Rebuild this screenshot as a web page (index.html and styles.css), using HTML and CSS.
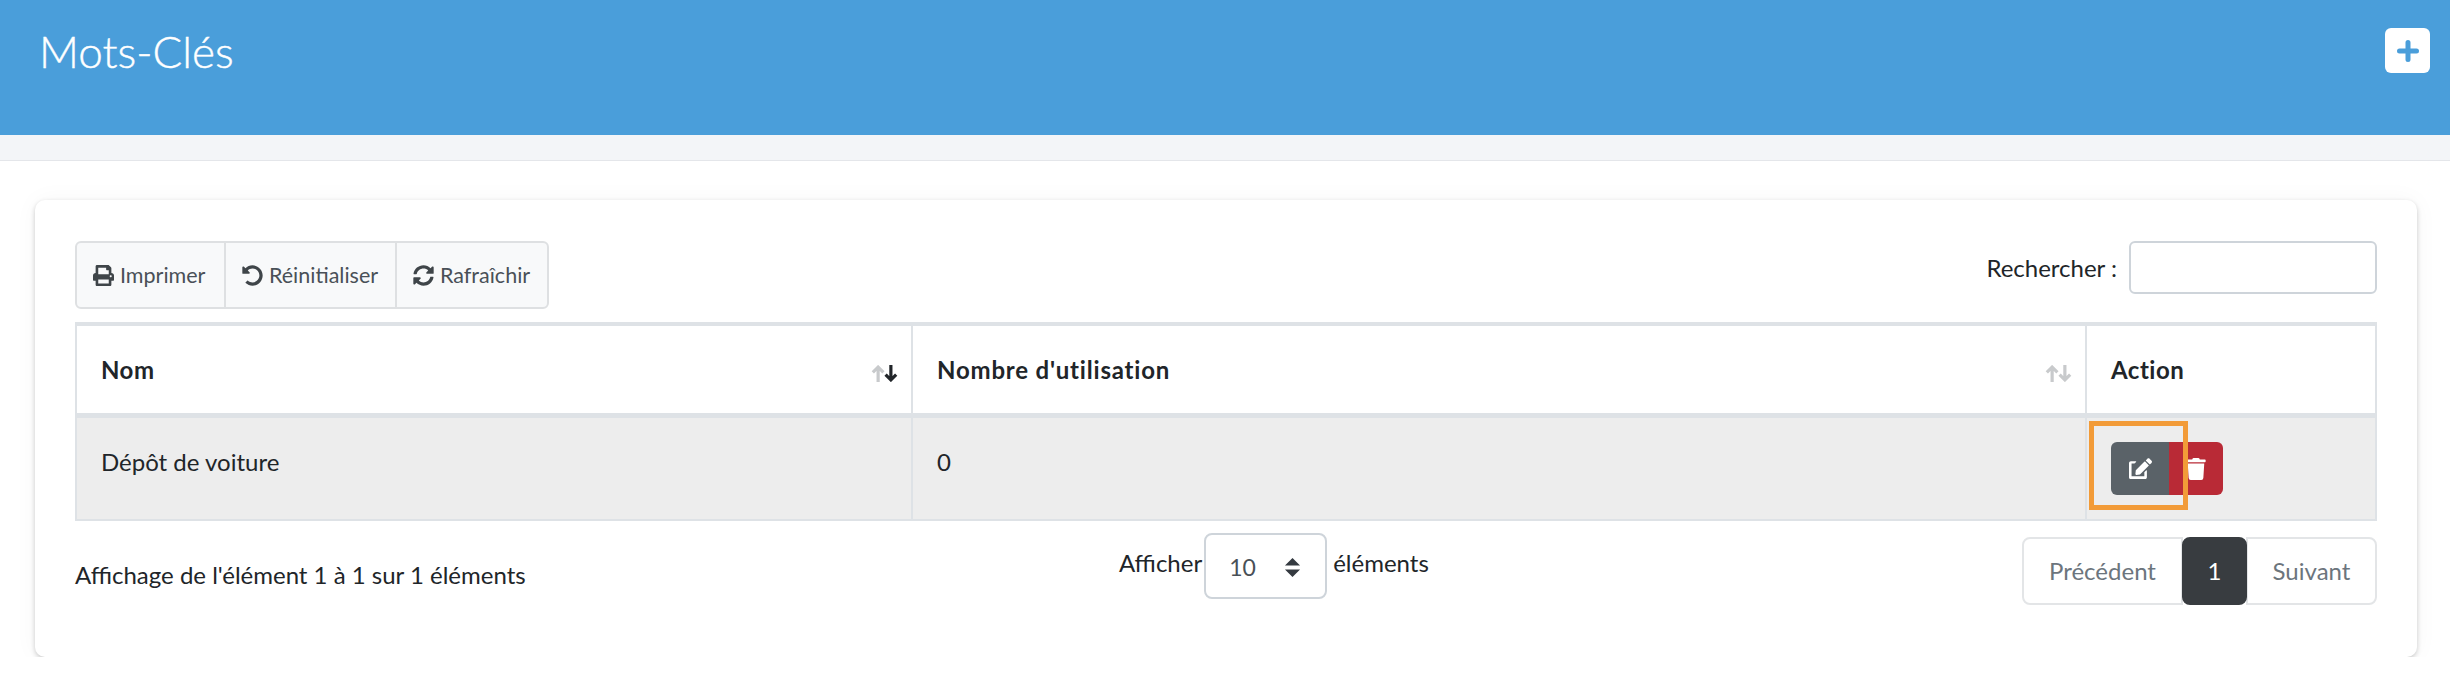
FILE: index.html
```html
<!DOCTYPE html>
<html lang="fr">
<head>
  <meta charset="UTF-8" />
  <title>Mots-Clés</title>
  <link rel="stylesheet" href="styles.css">
</head>
<body>
  <header class="page-header">
    <h1>Mots-Clés</h1>
    <button class="add-btn" type="button" aria-label="Ajouter">
      <svg viewBox="0 0 22 22" width="22" height="22"><path d="M11 2.5v17M2.5 11h17" /></svg>
    </button>
  </header>
  <div class="band"></div>

  <main class="content">
    <section class="card">
      <div class="top-row">
        <div class="tools">
          <button class="tool tool-print" type="button">
            <svg viewBox="0 0 512 512"><path d="M448 192V77.25c0-8.49-3.37-16.62-9.37-22.63L393.37 9.37c-6-6-14.14-9.37-22.63-9.37H96C78.33 0 64 14.33 64 32v160c-35.35 0-64 28.65-64 64v112c0 8.84 7.16 16 16 16h48v96c0 17.67 14.33 32 32 32h320c17.67 0 32-14.33 32-32v-96h48c8.84 0 16-7.16 16-16V256c0-35.35-28.65-64-64-64zm-64 256H128v-96h256v96zm0-224H128V64h192v48c0 8.84 7.16 16 16 16h48v96zm48 72c-13.25 0-24-10.75-24-24 0-13.26 10.75-24 24-24s24 10.74 24 24c0 13.25-10.75 24-24 24z"/></svg>
            Imprimer
          </button>
          <button class="tool tool-reset" type="button">
            <svg viewBox="0 0 512 512"><path d="M255.545 8c-66.269.119-126.438 26.233-170.86 68.685L48.971 40.971C33.851 25.851 8 36.559 8 57.941V192c0 13.255 10.745 24 24 24h134.059c21.382 0 32.09-25.851 16.971-40.971l-41.75-41.75c30.864-28.899 70.801-44.907 113.23-45.273 92.398-.798 170.283 73.977 169.484 169.442C423.236 348.009 349.816 424 256 424c-41.127 0-79.997-14.678-110.63-41.556-4.743-4.161-11.906-3.908-16.368.553L89.34 422.659c-4.872 4.872-4.631 12.815.482 17.433C133.798 479.813 192.074 504 256 504c136.966 0 247.999-111.033 248-247.998C504.001 119.193 392.354 7.755 255.545 8z"/></svg>
            Réinitialiser
          </button>
          <button class="tool tool-refresh" type="button">
            <svg viewBox="0 0 512 512"><path d="M370.72 133.28C339.458 104.008 298.888 87.962 255.848 88c-77.458.068-144.328 53.178-162.791 126.85-1.344 5.363-6.122 9.15-11.651 9.15H24.103c-7.498 0-13.194-6.807-11.807-14.176C33.933 94.924 134.813 8 256 8c66.448 0 126.791 26.136 171.315 68.685L463.03 40.97C478.149 25.851 504 36.559 504 57.941V192c0 13.255-10.745 24-24 24H345.941c-21.382 0-32.09-25.851-16.971-40.971l41.75-41.749zM32 296h134.059c21.382 0 32.09 25.851 16.971 40.971l-41.75 41.75c31.262 29.273 71.835 45.319 114.876 45.28 77.418-.07 144.315-53.144 162.787-126.849 1.344-5.363 6.122-9.15 11.651-9.15h57.304c7.498 0 13.194 6.807 11.807 14.176C478.067 417.076 377.187 504 256 504c-66.448 0-126.791-26.136-171.315-68.685L48.97 471.03C33.851 486.149 8 475.441 8 454.059V320c0-13.255 10.745-24 24-24z"/></svg>
            Rafraîchir
          </button>
        </div>
        <label class="search">
          Rechercher :
          <input type="text" />
        </label>
      </div>

      <table class="data-table">
        <colgroup>
          <col class="col-name">
          <col class="col-count">
          <col class="col-action">
        </colgroup>
        <thead>
          <tr>
            <th>
              <div class="th-inner">
                Nom
                <svg class="sort" viewBox="0 0 25 16">
                  <path class="up" d="M6.5 16V2M1.5 7l5-5 5 5" />
                  <path class="down on" d="M18.5 0v14M13.5 9l5 5 5-5" />
                </svg>
              </div>
            </th>
            <th class="th-wide">
              <div class="th-inner">
                Nombre d'utilisation
                <svg class="sort" viewBox="0 0 25 16">
                  <path class="up" d="M6.5 16V2M1.5 7l5-5 5 5" />
                  <path class="down" d="M18.5 0v14M13.5 9l5 5 5-5" />
                </svg>
              </div>
            </th>
            <th>Action</th>
          </tr>
        </thead>
        <tbody>
          <tr>
            <td>Dépôt de voiture</td>
            <td>0</td>
            <td>
              <div class="actions">
                <button class="act act-edit" type="button" aria-label="Modifier">
                  <svg viewBox="0 0 576 512"><path d="M402.6 83.2l90.2 90.2c3.8 3.8 3.8 10 0 13.8L274.4 405.6l-92.8 10.3c-12.4 1.4-22.9-9.1-21.5-21.5l10.3-92.8L388.8 83.2c3.8-3.8 10-3.8 13.8 0zm162-22.9l-48.8-48.8c-15.2-15.2-39.9-15.2-55.2 0l-35.4 35.4c-3.8 3.8-3.8 10 0 13.8l90.2 90.2c3.8 3.8 10 3.8 13.8 0l35.4-35.4c15.2-15.3 15.2-40 0-55.2zM384 346.2V448H64V128h73.1c3.2 0 6.2-1.3 8.5-3.5l32-32c7.6-7.6 2.2-20.5-8.5-20.5H48C21.5 72 0 93.5 0 120v352c0 26.5 21.5 48 48 48h352c26.5 0 48-21.5 48-48V314.2c0-10.7-12.9-16-20.5-8.5l-32 32c-2.2 2.3-3.5 5.3-3.5 8.5z"/></svg>
                </button>
                <button class="act act-delete" type="button" aria-label="Supprimer">
                  <svg viewBox="0 0 448 512"><path d="M432 32H312l-9.4-18.7A24 24 0 0 0 281.1 0H166.8a23.72 23.72 0 0 0-21.4 13.3L136 32H16A16 16 0 0 0 0 48v32a16 16 0 0 0 16 16h416a16 16 0 0 0 16-16V48a16 16 0 0 0-16-16zM53.2 467a48 48 0 0 0 47.9 45h245.8a48 48 0 0 0 47.9-45L416 128H32z"/></svg>
                </button>
                <span class="highlight"></span>
              </div>
            </td>
          </tr>
        </tbody>
      </table>

      <div class="table-footer">
        <div class="info">Affichage de l'élément 1 à 1 sur 1 éléments</div>
        <div class="length">
          <span>Afficher</span>
          <div class="select">
            <span>10</span>
            <svg viewBox="0 0 18 20"><path d="M9 0l8 8H1zM9 20l-8-8h16z"/></svg>
          </div>
          <span>éléments</span>
        </div>
        <nav class="pager">
          <a class="page page-prev">Précédent</a>
          <a class="page page-current">1</a>
          <a class="page page-next">Suivant</a>
        </nav>
      </div>
    </section>
  </main>
</body>
</html>
```

FILE: styles.css
```css
* {
  box-sizing: border-box;
}
body {
  margin: 0;
  background: #fff;
  color: #212529;
  font-family: Lato, "Noto Sans", sans-serif;
  font-size: 24px;
  line-height: 36px;
}
button {
  font-family: inherit;
  cursor: pointer;
}

/* header */
.page-header {
  display: flex;
  justify-content: space-between;
  align-items: flex-start;
  height: 135px;
  padding: 28px 20px 0 39px;
  background: #4a9eda;
}
.page-header h1 {
  margin: -2px 0 0;
  color: #fff;
  font-size: 44px;
  font-weight: 300;
  line-height: 50px;
  -webkit-text-stroke: 0.4px #fff;
}
.add-btn {
  display: flex;
  align-items: center;
  justify-content: center;
  width: 45px;
  height: 45px;
  padding: 0;
  background: #fff;
  border: none;
  border-radius: 6px;
}
.add-btn path {
  fill: none;
  stroke: #4a9eda;
  stroke-width: 5;
  stroke-linecap: round;
}
.band {
  height: 26px;
  background: #f3f5f8;
  border-bottom: 1px solid #e4e6ea;
}

/* card */
.content {
  padding: 39px 33px 0 35px;
}
.card {
  height: 457px;
  padding: 41px 40px 0;
  background: #fff;
  border-radius: 10px;
  box-shadow: 0 2px 5px rgba(0, 0, 0, 0.2), 0 0 24px rgba(0, 0, 0, 0.04);
}
.top-row {
  display: flex;
  justify-content: space-between;
  align-items: flex-start;
  margin-bottom: 13px;
}

/* toolbar */
.tools {
  display: flex;
  height: 68px;
  background: #f8f9fa;
  border: 2px solid #dee0e2;
  border-radius: 6px;
}
.tool {
  display: flex;
  align-items: center;
  gap: 6px;
  padding: 0 0 0 16px;
  background: none;
  border: none;
  border-right: 2px solid #dee0e2;
  color: #495057;
  font-size: 21.5px;
}
.tool:last-child {
  border-right: none;
}
.tool svg {
  width: 21px;
  height: 21px;
  fill: #3f4549;
}
.tool-print {
  width: 149px;
}
.tool-reset {
  width: 171px;
}
.tool-refresh {
  width: 150px;
}

/* search */
.search {
  display: flex;
  align-items: center;
  gap: 12px;
}
.search input {
  width: 248px;
  height: 53px;
  background: #fff;
  border: 2px solid #ced4da;
  border-radius: 6px;
}

/* table */
.data-table {
  width: 2302px;
  table-layout: fixed;
  border-collapse: separate;
  border-spacing: 0;
  border: 2px solid #dee2e6;
  border-top-width: 4px;
  line-height: 40px;
}
.col-name {
  width: 836px;
}
.col-count {
  width: 1174px;
}
.data-table th,
.data-table td {
  padding: 24px 24px 0;
  text-align: left;
  vertical-align: top;
  border-right: 2px solid #dee2e6;
}
.data-table th:last-child,
.data-table td:last-child {
  border-right: none;
}
.data-table th {
  height: 92px;
  border-bottom: 5px solid #dee2e6;
  font-weight: 700;
  letter-spacing: 0.5px;
}
.data-table .th-wide {
  letter-spacing: 0.8px;
}
.data-table td {
  height: 101px;
  background: #ededed;
}
.th-inner {
  display: flex;
  justify-content: space-between;
  align-items: center;
  margin-right: -11px;
}
.sort {
  width: 27px;
  height: 17px;
  margin-top: 6px;
  fill: none;
  stroke-width: 3;
}
.sort .up,
.sort .down {
  stroke: #c8cacc;
}
.sort .down.on {
  stroke: #212529;
}

/* row buttons */
.actions {
  position: relative;
  display: flex;
  width: 112px;
  height: 53px;
}
.act {
  display: flex;
  align-items: center;
  justify-content: center;
  height: 53px;
  padding: 0;
  border: none;
}
.act svg {
  fill: #fff;
}
.act-edit {
  width: 58px;
  background: #5a6268;
  border-radius: 6px 0 0 6px;
}
.act-edit svg {
  width: 23px;
  height: 21px;
}
.act-delete {
  width: 54px;
  background: #b92a36;
  border-radius: 0 6px 6px 0;
}
.act-delete svg {
  width: 20px;
  height: 22px;
}
.highlight {
  position: absolute;
  left: -22px;
  top: -21px;
  width: 99px;
  height: 89px;
  border: 5px solid #f29b38;
}

/* footer */
.table-footer {
  display: flex;
  justify-content: space-between;
  align-items: flex-start;
  margin-top: 12px;
}
.info {
  margin-top: 24px;
}
.length {
  display: flex;
  align-items: flex-start;
  gap: 6px;
}
.length > span {
  margin-top: 12px;
}
.select {
  display: flex;
  justify-content: space-between;
  align-items: center;
  width: 123px;
  height: 66px;
  margin-left: -4px;
  padding: 2px 24px 0 23px;
  border: 2px solid #ced4da;
  border-radius: 8px;
  color: #495057;
  font-size: 23px;
}
.select svg {
  width: 17px;
  height: 19px;
  fill: #343a40;
}
.pager {
  display: flex;
  height: 68px;
  margin-top: 4px;
}
.page {
  display: flex;
  align-items: center;
  justify-content: center;
  background: #fff;
  border: 2px solid #e3e5e7;
  color: #6c757d;
}
.page-prev {
  width: 161px;
  border-radius: 8px 0 0 8px;
}
.page-current {
  width: 65px;
  margin: 0 -1px;
  background: #383c40;
  border-color: #383c40;
  border-radius: 8px;
  color: #fff;
  position: relative;
}
.page-next {
  width: 131px;
  border-radius: 0 8px 8px 0;
}
```
